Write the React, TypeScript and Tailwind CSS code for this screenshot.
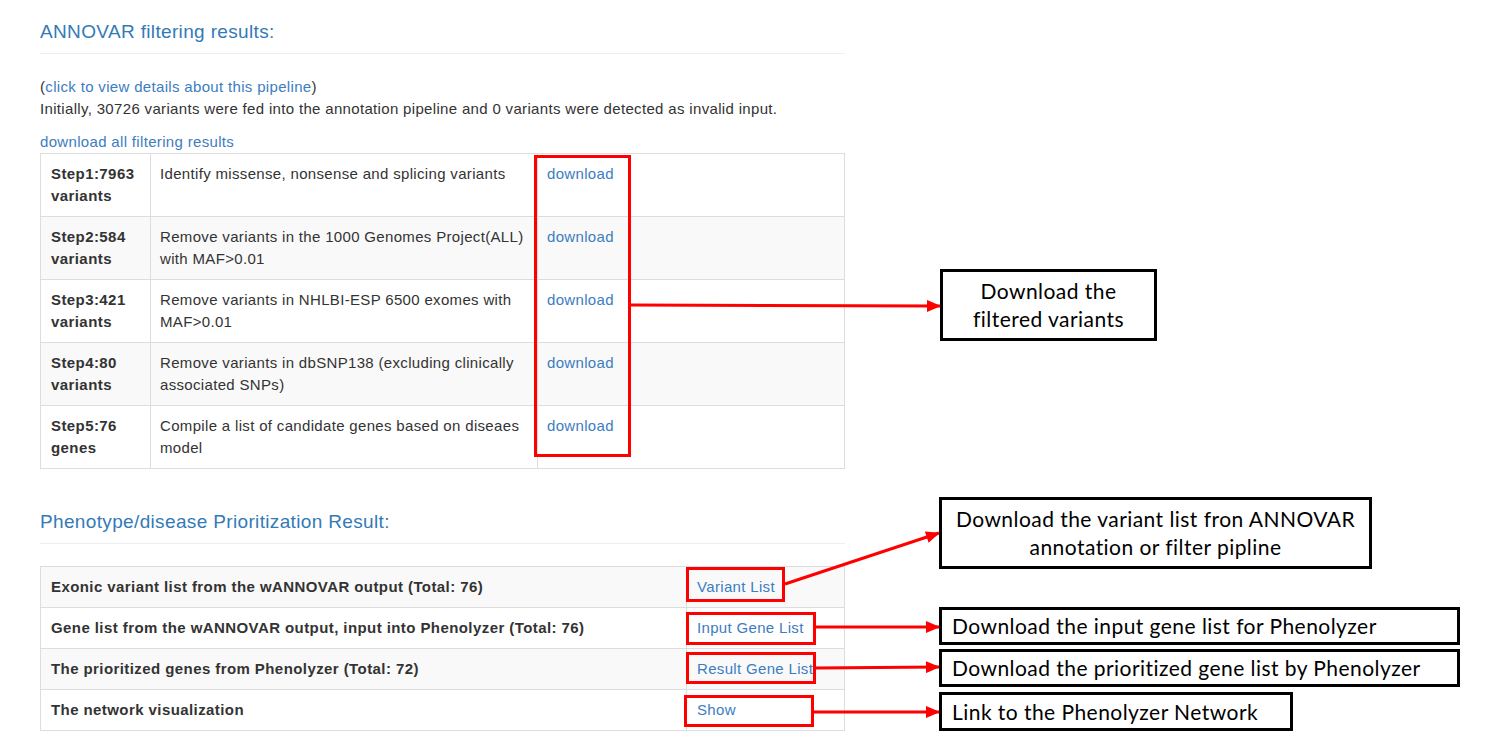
import type { ReactNode } from "react";

const steps = [
  { step: "Step1:7963", unit: "variants", desc: "Identify missense, nonsense and splicing variants" },
  { step: "Step2:584", unit: "variants", desc: "Remove variants in the 1000 Genomes Project(ALL) with MAF>0.01" },
  { step: "Step3:421", unit: "variants", desc: "Remove variants in NHLBI-ESP 6500 exomes with MAF>0.01" },
  { step: "Step4:80", unit: "variants", desc: "Remove variants in dbSNP138 (excluding clinically associated SNPs)" },
  { step: "Step5:76", unit: "genes", desc: "Compile a list of candidate genes based on diseaes model" },
];

const results = [
  { label: "Exonic variant list from the wANNOVAR output (Total: 76)", link: "Variant List" },
  { label: "Gene list from the wANNOVAR output, input into Phenolyzer (Total: 76)", link: "Input Gene List" },
  { label: "The prioritized genes from Phenolyzer (Total: 72)", link: "Result Gene List" },
  { label: "The network visualization", link: "Show" },
];

function Heading({ children }: { children: ReactNode }) {
  return (
    <>
      <h4 className="text-[19px] leading-[20px] tracking-[0.35px] text-[#337ab7]">{children}</h4>
      <hr className="mt-[11px] border-t border-[#eeeeee]" />
    </>
  );
}

function Link({ children }: { children: ReactNode }) {
  return <a className="cursor-pointer text-[#3c7dbf]">{children}</a>;
}

function Note({
  className,
  center = false,
  children,
}: {
  className: string;
  center?: boolean;
  children: ReactNode;
}) {
  return (
    <div
      className={`absolute flex flex-col justify-center border-[3px] border-black bg-white text-[21px] leading-[28px] tracking-[0.45px] text-black ${
        center ? "items-center text-center" : "pl-[10px]"
      } ${className}`}
      style={{ fontFamily: "Lato, 'Open Sans', sans-serif" }}
    >
      {children}
    </div>
  );
}

function Annotations() {
  return (
    <>
      <svg className="pointer-events-none absolute left-0 top-0" width={1512} height={756}>
        <defs>
          <marker
            id="head"
            markerUnits="userSpaceOnUse"
            markerWidth={14}
            markerHeight={12}
            refX={13}
            refY={6}
            orient="auto"
          >
            <path d="M0 0 L14 6 L0 12 Z" fill="#ff0000" />
          </marker>
        </defs>
        <g fill="none" stroke="#ff0000" strokeWidth={3}>
          <rect x={535.5} y={156.5} width={94} height={299} />
          <rect x={687.5} y={568.5} width={96} height={32} />
          <rect x={687.5} y={613.5} width={127} height={30} />
          <rect x={687.5} y={653.5} width={127} height={29} />
          <rect x={685.5} y={696.5} width={127} height={29} />
          <line x1={631} y1={305} x2={940} y2={306} markerEnd="url(#head)" />
          <line x1={785} y1={584} x2={939} y2={533} markerEnd="url(#head)" />
          <line x1={816} y1={627} x2={939} y2={627} markerEnd="url(#head)" />
          <line x1={816} y1={668} x2={939} y2={667} markerEnd="url(#head)" />
          <line x1={813} y1={712} x2={939} y2={712} markerEnd="url(#head)" />
        </g>
      </svg>
      <Note center className="left-[940px] top-[269px] h-[72px] w-[217px]">
        <span>Download the</span>
        <span>filtered variants</span>
      </Note>
      <Note center className="left-[939px] top-[497px] h-[72px] w-[433px]">
        <span>Download the variant list fron ANNOVAR</span>
        <span>annotation or filter pipline</span>
      </Note>
      <Note className="left-[939px] top-[607px] h-[38px] w-[521px]">
        Download the input gene list for Phenolyzer
      </Note>
      <Note className="left-[939px] top-[649px] h-[38px] w-[521px]">
        Download the prioritized gene list by Phenolyzer
      </Note>
      <Note className="left-[939px] top-[692px] h-[39px] w-[354px]">
        Link to the Phenolyzer Network
      </Note>
    </>
  );
}

export default function App() {
  return (
    <div
      className="relative h-[756px] w-[1512px] overflow-hidden bg-white text-[15px] leading-[22px] tracking-[0.33px] text-[#333333]"
      style={{ fontFamily: "'Liberation Sans', Arial, sans-serif" }}
    >
      <div className="ml-[40px] w-[805px] pt-[22px]">
        <Heading>ANNOVAR filtering results:</Heading>

        <p className="mt-[22px]">
          (<Link>click to view details about this pipeline</Link>)
          <br />
          Initially, 30726 variants were fed into the annotation pipeline and 0 variants were detected as invalid
          input.
        </p>

        <div className="mt-[11px]">
          <Link>download all filtering results</Link>
        </div>

        <table className="w-full border-collapse border border-[#dddddd]">
          <colgroup>
            <col className="w-[110px]" />
            <col className="w-[387px]" />
            <col />
          </colgroup>
          <tbody>
            {steps.map((s, i) => (
              <tr key={s.step} className={`h-[63px] ${i % 2 === 1 ? "bg-[#f9f9f9]" : ""}`}>
                <td className="border border-[#dddddd] px-[10px] py-[9px] align-top font-bold tracking-[0.42px]">
                  {s.step}
                  <br />
                  {s.unit}
                </td>
                <td className="border border-[#dddddd] px-[9px] py-[9px] align-top">{s.desc}</td>
                <td className="border border-[#dddddd] px-[9px] py-[9px] align-top">
                  <Link>download</Link>
                </td>
              </tr>
            ))}
          </tbody>
        </table>

        <div className="mt-[43px]">
          <Heading>Phenotype/disease Prioritization Result:</Heading>
        </div>

        <table className="mt-[22px] w-full border-collapse border border-[#dddddd]">
          <colgroup>
            <col className="w-[646px]" />
            <col />
          </colgroup>
          <tbody>
            {results.map((r, i) => (
              <tr key={r.link} className={`h-[41px] ${i % 2 === 0 ? "bg-[#f9f9f9]" : ""}`}>
                <td className="border border-[#dddddd] px-[10px] py-[9px] font-bold tracking-[0.42px]">
                  {r.label}
                </td>
                <td className="border border-[#dddddd] px-[10px] py-[9px]">
                  <Link>{r.link}</Link>
                </td>
              </tr>
            ))}
          </tbody>
        </table>
      </div>
      <Annotations />
    </div>
  );
}
